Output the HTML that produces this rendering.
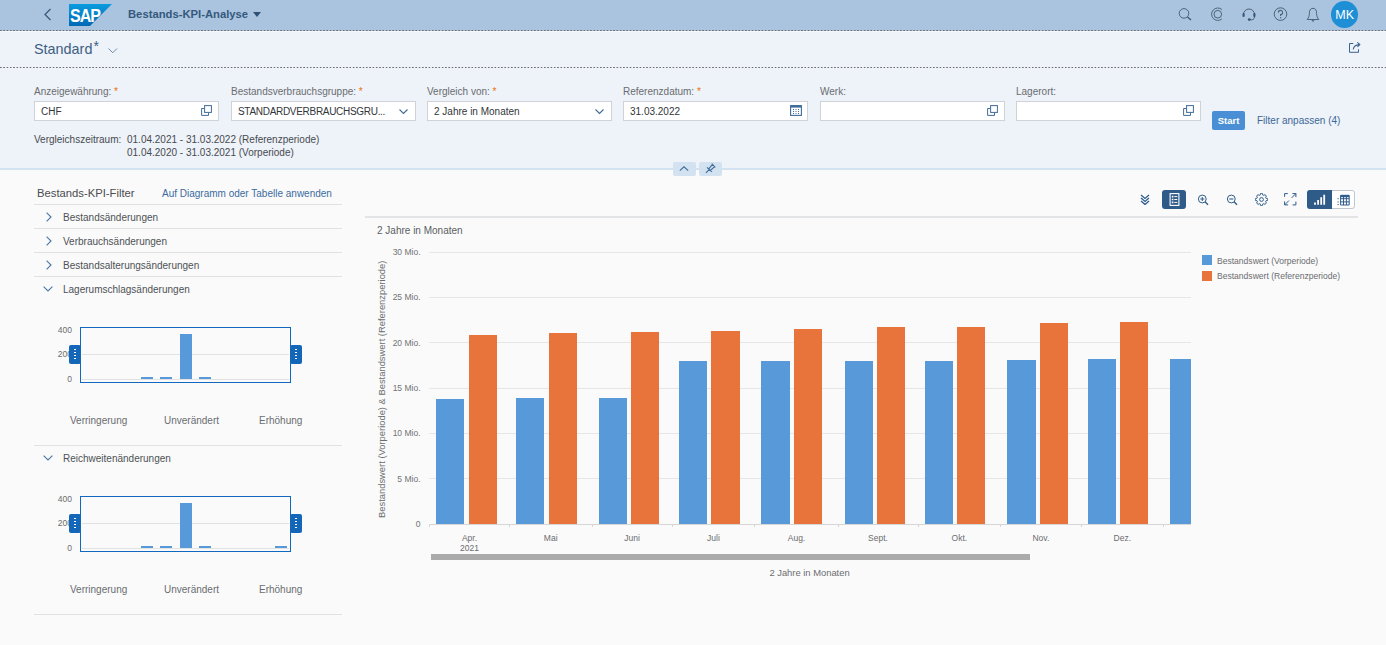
<!DOCTYPE html>
<html><head><meta charset="utf-8">
<style>
*{box-sizing:border-box;margin:0;padding:0}
html,body{width:1386px;height:645px;overflow:hidden;background:#fafafa;font-family:"Liberation Sans",sans-serif;color:#32363a}
.a{position:absolute;white-space:nowrap}
#shell{position:absolute;left:0;top:0;width:1386px;height:31px;background:#aac4df}
.dots{position:absolute;left:0;width:1386px;height:1px;background-image:linear-gradient(to right,#6e6e70 0,#6e6e70 1.5px,transparent 1.5px);background-size:3.3px 1px}
#hdr{position:absolute;left:0;top:31px;width:1386px;height:139px;background:#eef2f9;border-bottom:2px solid #d3e2f0}
.lbl{font-size:10px;color:#6a6d70}
.req{color:#e9730c}
.inp{position:absolute;top:101px;height:19.5px;width:185px;background:#fff;border:1px solid #cfd3d8}
.inp span{position:absolute;left:6px;top:3.6px;font-size:10px;color:#32363a}
.ptxt{font-size:10px;color:#474b4f}
.line{position:absolute;height:1px;background:#e0e2e4}
.ytk{font-size:9px;color:#6a6d70;text-align:right;width:40px}
.xl{font-size:9px;color:#6a6d70;text-align:center;width:60px}
.bb{position:absolute;background:#5899da}
.ob{position:absolute;background:#e8743b}
</style></head><body>
<div id="shell">
  <svg class="a" style="left:43px;top:8px" width="9" height="13" viewBox="0 0 9 13"><path d="M7.5 1 L2 6.5 L7.5 12" fill="none" stroke="#3b5a7a" stroke-width="1.3"/></svg>
  <svg class="a" style="left:69px;top:4px" width="43" height="22" viewBox="0 0 43 22">
    <defs><linearGradient id="sg" x1="0" y1="0" x2="0" y2="1"><stop offset="0" stop-color="#0a9cde"/><stop offset="1" stop-color="#0168b4"/></linearGradient></defs>
    <path d="M0 0 H43 L21 22 H0 Z" fill="url(#sg)"/>
    <text x="1" y="17.8" font-family="Liberation Sans" font-weight="bold" font-size="19" fill="#fff" letter-spacing="-1.2" textLength="30" lengthAdjust="spacingAndGlyphs">SAP</text>
  </svg>
  <div class="a" style="left:128px;top:7.8px;font-size:11.25px;font-weight:bold;color:#35597d">Bestands-KPI-Analyse</div>
  <svg class="a" style="left:253px;top:12px" width="8" height="5" viewBox="0 0 8 5"><path d="M0 0 H8 L4 5Z" fill="#2e5276"/></svg>
</div>
<div class="dots" style="top:30px"></div>
<div id="hdr"></div>
<div class="a" style="left:0;top:31px;width:1386px;height:1px;background:#f6f8fc"></div>
<div class="dots" style="top:67px"></div>


<svg class="a" style="left:1178px;top:7px" width="14" height="14" viewBox="0 0 14 14"><circle cx="6" cy="6.4" r="4.8" fill="none" stroke="#4d6479" stroke-width="1"/><path d="M9.5 10 L13 13" stroke="#3f5a73" stroke-width="1.4"/></svg>
<svg class="a" style="left:1211px;top:7px" width="14" height="15" viewBox="0 0 14 15"><path d="M10.8 2.45 A6.2 6.2 0 1 0 10.8 11.95" fill="none" stroke="#4d6479" stroke-width="1"/><circle cx="6.8" cy="7.2" r="3.8" fill="none" stroke="#4d6479" stroke-width="1"/></svg>
<svg class="a" style="left:1242px;top:7px" width="14" height="15" viewBox="0 0 14 15"><path d="M1.5 7.5 A5.5 5.5 0 0 1 12.5 7.5 V10 A3 3 0 0 1 8 12.5" fill="none" stroke="#4d6479" stroke-width="1"/><rect x="0.5" y="6" width="2.2" height="4" rx="1" fill="#35597d"/><rect x="11.3" y="6" width="2.2" height="4" rx="1" fill="#35597d"/><circle cx="7.3" cy="12.6" r="1.4" fill="#35597d"/></svg>
<svg class="a" style="left:1273px;top:7px" width="15" height="15" viewBox="0 0 15 15"><circle cx="7.5" cy="7.1" r="6.3" fill="none" stroke="#4d6479" stroke-width="1"/><path d="M5.4 5.6 A2.1 2.1 0 1 1 7.6 7.6 V9" fill="none" stroke="#4d6479" stroke-width="1.1"/><circle cx="7.6" cy="10.7" r="0.7" fill="#4d6479"/></svg>
<svg class="a" style="left:1306px;top:7px" width="14" height="15" viewBox="0 0 14 15"><path d="M7 1.3 C4 1.3 3.4 3.8 3.4 6.5 C3.4 9 2.6 10.6 1.2 12.5 H12.8 C11.4 10.6 10.6 9 10.6 6.5 C10.6 3.8 10 1.3 7 1.3 Z" fill="none" stroke="#4d6479" stroke-width="1"/><path d="M5.6 13.2 A1.4 1.3 0 0 0 8.4 13.2Z" fill="#35597d"/></svg>
<div class="a" style="left:1331.4px;top:1.1px;width:26.7px;height:26.7px;border-radius:50%;background:#1f8fd5"></div>
<div class="a" style="left:1331.4px;top:8px;width:26.7px;text-align:center;font-size:12.5px;color:#fff">MK</div>
<!-- variant -->
<div class="a" style="left:34px;top:41px;font-size:14.4px;color:#3d5f82">Standard<span style="position:relative;top:-3px;left:1px;font-size:14px">*</span></div>
<svg class="a" style="left:108px;top:48px" width="10" height="6" viewBox="0 0 10 6"><path d="M0.5 0.5 L4.75 4.75 L9 0.5" fill="none" stroke="#6c8aa8" stroke-width="1"/></svg>
<svg class="a" style="left:1348px;top:41px" width="14" height="13" viewBox="0 0 14 13"><path d="M5.3 2.5 H1.5 V11.3 H10.5 V8.3" fill="none" stroke="#3a6390" stroke-width="1"/><path d="M5.2 8.3 Q5.8 4.2 11.3 3.6" fill="none" stroke="#3a6390" stroke-width="1.1"/><path d="M9.3 1.4 L11.8 3.5 L9.5 5.8" fill="none" stroke="#3a6390" stroke-width="1.1"/></svg>

<!-- filter bar -->
<div class="a lbl" style="left:34px;top:85.7px">Anzeigewährung: <span class="req">*</span></div>
<div class="a lbl" style="left:231px;top:85.7px">Bestandsverbrauchsgruppe: <span class="req">*</span></div>
<div class="a lbl" style="left:427px;top:85.7px">Vergleich von: <span class="req">*</span></div>
<div class="a lbl" style="left:623px;top:85.7px">Referenzdatum: <span class="req">*</span></div>
<div class="a lbl" style="left:820px;top:85.7px">Werk:</div>
<div class="a lbl" style="left:1016px;top:85.7px">Lagerort:</div>

<div class="inp" style="left:34px"><span>CHF</span></div>
<div class="inp" style="left:231px"><span style="letter-spacing:-0.3px">STANDARDVERBRAUCHSGRU...</span></div>
<div class="inp" style="left:427px"><span>2 Jahre in Monaten</span></div>
<div class="inp" style="left:623px"><span>31.03.2022</span></div>
<div class="inp" style="left:820px"></div>
<div class="inp" style="left:1016px"></div>

<!-- value help icons -->
<svg class="a" style="left:201px;top:105px" width="11" height="11" viewBox="0 0 11 11"><path d="M3 3.5 H0.6 V10.4 H7.5 V8" fill="none" stroke="#3f6c9a" stroke-width="1"/><rect x="3.6" y="0.6" width="6.8" height="6.8" fill="none" stroke="#3f6c9a" stroke-width="1"/></svg>
<svg class="a" style="left:987px;top:105px" width="11" height="11" viewBox="0 0 11 11"><path d="M3 3.5 H0.6 V10.4 H7.5 V8" fill="none" stroke="#3f6c9a" stroke-width="1"/><rect x="3.6" y="0.6" width="6.8" height="6.8" fill="none" stroke="#3f6c9a" stroke-width="1"/></svg>
<svg class="a" style="left:1183px;top:105px" width="11" height="11" viewBox="0 0 11 11"><path d="M3 3.5 H0.6 V10.4 H7.5 V8" fill="none" stroke="#3f6c9a" stroke-width="1"/><rect x="3.6" y="0.6" width="6.8" height="6.8" fill="none" stroke="#3f6c9a" stroke-width="1"/></svg>
<!-- dropdown chevrons -->
<svg class="a" style="left:399px;top:108.5px" width="10" height="6" viewBox="0 0 10 6"><path d="M0.5 0.5 L4.5 4.5 L8.5 0.5" fill="none" stroke="#3f6c9a" stroke-width="1.1"/></svg>
<svg class="a" style="left:595px;top:108.5px" width="10" height="6" viewBox="0 0 10 6"><path d="M0.5 0.5 L4.5 4.5 L8.5 0.5" fill="none" stroke="#3f6c9a" stroke-width="1.1"/></svg>
<!-- calendar -->
<svg class="a" style="left:790px;top:104px" width="12" height="12" viewBox="0 0 12 12"><rect x="0.6" y="1.6" width="10.8" height="9.8" fill="none" stroke="#3f6c9a" stroke-width="1.1"/><rect x="0.6" y="1.6" width="10.8" height="2" fill="#3f6c9a"/><path d="M3 5.5h1M5.5 5.5h1M8 5.5h1M3 7.5h1M5.5 7.5h1M8 7.5h1M3 9.5h1M5.5 9.5h1M8 9.5h1" stroke="#3f6c9a" stroke-width="1"/></svg>

<div class="a" style="left:1212px;top:111px;width:33px;height:19px;background:#4a8fd5;border-radius:2px;color:#fff;font-size:9.5px;font-weight:bold;text-align:center;line-height:19px">Start</div>
<div class="a" style="left:1257px;top:115.3px;font-size:10px;color:#3b6895">Filter anpassen (4)</div>

<div class="a ptxt" style="left:34px;top:134px">Vergleichszeitraum:</div>
<div class="a ptxt" style="left:127px;top:134px">01.04.2021 - 31.03.2022 (Referenzperiode)</div>
<div class="a ptxt" style="left:127px;top:147px">01.04.2020 - 31.03.2021 (Vorperiode)</div>

<div class="a" style="left:673px;top:162px;width:23px;height:14px;background:#d3e2f0;border-radius:2px"></div>
<div class="a" style="left:699px;top:162px;width:23px;height:14px;background:#d3e2f0;border-radius:2px"></div>
<svg class="a" style="left:679px;top:166px" width="11" height="6" viewBox="0 0 11 6"><path d="M0.8 4.6 L5 0.8 L9.2 4.6" fill="none" stroke="#3f6c9a" stroke-width="1.1"/></svg>
<svg class="a" style="left:700px;top:160px" width="22" height="16" viewBox="0 0 22 16"><path d="M6.9 7.4 L11.9 11.8 M5.9 12.9 L9.4 9.3 M8.8 8.9 L12.4 4.4 M10.3 10.5 L14.6 6.6 M11.7 3.7 L15.3 7.3" fill="none" stroke="#3f6c9a" stroke-width="1.1"/></svg>

<!-- left panel -->
<div class="a" style="left:37px;top:187px;font-size:11.25px;color:#4a4d51">Bestands-KPI-Filter</div>
<div class="a" style="left:162px;top:187.8px;font-size:10px;color:#3a6c9f">Auf Diagramm oder Tabelle anwenden</div>
<div class="line" style="left:34px;top:204px;width:308px"></div>
<svg class="a" style="left:46px;top:212px" width="6" height="10" viewBox="0 0 6 10"><path d="M0.6 0.6 L5 5 L0.6 9.4" fill="none" stroke="#4a77a8" stroke-width="1.1"/></svg>
<div class="a ptxt" style="left:63px;top:211.7px;color:#4e5256">Bestandsänderungen</div>
<div class="line" style="left:34px;top:228px;width:308px"></div>
<svg class="a" style="left:46px;top:236px" width="6" height="10" viewBox="0 0 6 10"><path d="M0.6 0.6 L5 5 L0.6 9.4" fill="none" stroke="#4a77a8" stroke-width="1.1"/></svg>
<div class="a ptxt" style="left:63px;top:235.7px;color:#4e5256">Verbrauchsänderungen</div>
<div class="line" style="left:34px;top:252px;width:308px"></div>
<svg class="a" style="left:46px;top:260px" width="6" height="10" viewBox="0 0 6 10"><path d="M0.6 0.6 L5 5 L0.6 9.4" fill="none" stroke="#4a77a8" stroke-width="1.1"/></svg>
<div class="a ptxt" style="left:63px;top:259.7px;color:#4e5256">Bestandsalterungsänderungen</div>
<div class="line" style="left:34px;top:276px;width:308px"></div>
<svg class="a" style="left:43px;top:286px" width="10" height="6" viewBox="0 0 10 6"><path d="M0.6 0.6 L5 5 L9.4 0.6" fill="none" stroke="#4a77a8" stroke-width="1.1"/></svg>
<div class="a ptxt" style="left:63px;top:283.7px;color:#4e5256">Lagerumschlagsänderungen</div>

<div class="a" style="left:40px;top:325px;width:32px;font-size:8.5px;color:#6a6d70;text-align:right">400</div>
<div class="a" style="left:40px;top:349px;width:32px;font-size:8.5px;color:#6a6d70;text-align:right">200</div>
<div class="a" style="left:40px;top:374px;width:32px;font-size:8.5px;color:#6a6d70;text-align:right">0</div>
<div class="a" style="left:80px;top:327px;width:211px;height:56px;border:1.5px solid #1268c0;background:#fafafa"></div>
<div class="line" style="left:82px;top:354px;width:207px"></div>
<div class="line" style="left:82px;top:379px;width:207px"></div>
<div class="bb" style="left:141px;top:377px;width:12px;height:2px"></div>
<div class="bb" style="left:160px;top:377px;width:12px;height:2px"></div>
<div class="bb" style="left:180px;top:334px;width:12px;height:45px"></div>
<div class="bb" style="left:199px;top:377px;width:12px;height:2px"></div>
<div class="a" style="left:69px;top:345px;width:12px;height:19px;background:#1466b8;border-radius:2px"></div>
<div class="a" style="left:74px;top:349px;width:2px;height:11px;background-image:linear-gradient(#fff 50%,transparent 50%);background-size:2px 3px"></div>
<div class="a" style="left:290px;top:345px;width:12px;height:19px;background:#1466b8;border-radius:2px"></div>
<div class="a" style="left:295px;top:349px;width:2px;height:11px;background-image:linear-gradient(#fff 50%,transparent 50%);background-size:2px 3px"></div>

<div class="a ptxt" style="left:70px;top:414.8px;color:#6a6d70">Verringerung</div>
<div class="a ptxt" style="left:164px;top:414.8px;color:#6a6d70">Unverändert</div>
<div class="a ptxt" style="left:259px;top:414.8px;color:#6a6d70">Erhöhung</div>
<div class="line" style="left:34px;top:445px;width:308px"></div>
<svg class="a" style="left:43px;top:455px" width="10" height="6" viewBox="0 0 10 6"><path d="M0.6 0.6 L5 5 L9.4 0.6" fill="none" stroke="#4a77a8" stroke-width="1.1"/></svg><div class="a ptxt" style="left:63px;top:452.7px;color:#4e5256">Reichweitenänderungen</div>

<div class="a" style="left:40px;top:494px;width:32px;font-size:8.5px;color:#6a6d70;text-align:right">400</div>
<div class="a" style="left:40px;top:518px;width:32px;font-size:8.5px;color:#6a6d70;text-align:right">200</div>
<div class="a" style="left:40px;top:543px;width:32px;font-size:8.5px;color:#6a6d70;text-align:right">0</div>
<div class="a" style="left:80px;top:496px;width:211px;height:56px;border:1.5px solid #1268c0;background:#fafafa"></div>
<div class="line" style="left:82px;top:523px;width:207px"></div>
<div class="line" style="left:82px;top:548px;width:207px"></div>
<div class="bb" style="left:141px;top:546px;width:12px;height:2px"></div>
<div class="bb" style="left:160px;top:546px;width:12px;height:2px"></div>
<div class="bb" style="left:180px;top:503px;width:12px;height:45px"></div>
<div class="bb" style="left:199px;top:546px;width:12px;height:2px"></div>
<div class="bb" style="left:275px;top:546px;width:12px;height:2px"></div>
<div class="a" style="left:69px;top:514px;width:12px;height:19px;background:#1466b8;border-radius:2px"></div>
<div class="a" style="left:74px;top:518px;width:2px;height:11px;background-image:linear-gradient(#fff 50%,transparent 50%);background-size:2px 3px"></div>
<div class="a" style="left:290px;top:514px;width:12px;height:19px;background:#1466b8;border-radius:2px"></div>
<div class="a" style="left:295px;top:518px;width:2px;height:11px;background-image:linear-gradient(#fff 50%,transparent 50%);background-size:2px 3px"></div>

<div class="a ptxt" style="left:70px;top:583.8px;color:#6a6d70">Verringerung</div>
<div class="a ptxt" style="left:164px;top:583.8px;color:#6a6d70">Unverändert</div>
<div class="a ptxt" style="left:259px;top:583.8px;color:#6a6d70">Erhöhung</div>
<div class="line" style="left:34px;top:614px;width:308px"></div>

<!-- chart toolbar -->
<svg class="a" style="left:1140px;top:194px" width="10" height="11" viewBox="0 0 10 11"><path d="M1 1 L5 4.5 L9 1 M1 4 L5 7.5 L9 4 M1 7 L5 10.5 L9 7" fill="none" stroke="#2f5d8c" stroke-width="1.3"/></svg>
<div class="a" style="left:1162px;top:190px;width:24px;height:19px;background:#2f5b88;border-radius:3px"></div>
<svg class="a" style="left:1169px;top:193px" width="11" height="13" viewBox="0 0 11 13"><rect x="1.1" y="0.6" width="8.8" height="11.8" fill="none" stroke="#fff" stroke-width="1.1"/><path d="M2.8 2.8h1.6v1.6h-1.6zM2.8 5.7h1.6v1.6h-1.6zM2.8 8.6h1.6v1.6h-1.6z" fill="#fff"/><path d="M5.3 3.6h3M5.3 6.5h3M5.3 9.4h3" stroke="#fff" stroke-width="1"/></svg>
<svg class="a" style="left:1197px;top:193.5px" width="12" height="12" viewBox="0 0 12 12"><circle cx="5.3" cy="5" r="3.9" fill="none" stroke="#2f5d8c" stroke-width="1"/><path d="M8.1 7.8 L11 10.7" stroke="#2f5d8c" stroke-width="1.4"/><path d="M3.3 5h4M5.3 3v4" stroke="#2f5d8c" stroke-width="1"/></svg>
<svg class="a" style="left:1226px;top:193.5px" width="12" height="12" viewBox="0 0 12 12"><circle cx="5.3" cy="5" r="3.9" fill="none" stroke="#2f5d8c" stroke-width="1"/><path d="M8.1 7.8 L11 10.7" stroke="#2f5d8c" stroke-width="1.4"/><path d="M3.3 5h4" stroke="#2f5d8c" stroke-width="1.1"/></svg>
<svg class="a" style="left:1254.5px;top:192.8px" width="13" height="13" viewBox="0 0 13 13"><path d="M10.91 5.18 L12.41 5.47 A6.0 6.0 0 0 1 12.41 7.53 L10.91 7.82 A4.6 4.6 0 0 1 10.55 8.68 L11.41 9.95 A6.0 6.0 0 0 1 9.95 11.41 L8.68 10.55 A4.6 4.6 0 0 1 7.82 10.91 L7.53 12.41 A6.0 6.0 0 0 1 5.47 12.41 L5.18 10.91 A4.6 4.6 0 0 1 4.32 10.55 L3.05 11.41 A6.0 6.0 0 0 1 1.59 9.95 L2.45 8.68 A4.6 4.6 0 0 1 2.09 7.82 L0.59 7.53 A6.0 6.0 0 0 1 0.59 5.47 L2.09 5.18 A4.6 4.6 0 0 1 2.45 4.32 L1.59 3.05 A6.0 6.0 0 0 1 3.05 1.59 L4.32 2.45 A4.6 4.6 0 0 1 5.18 2.09 L5.47 0.59 A6.0 6.0 0 0 1 7.53 0.59 L7.82 2.09 A4.6 4.6 0 0 1 8.68 2.45 L9.95 1.59 A6.0 6.0 0 0 1 11.41 3.05 L10.55 4.32 A4.6 4.6 0 0 1 10.91 5.18 Z" fill="none" stroke="#2f5d8c" stroke-width="1" stroke-linejoin="round"/><circle cx="6.5" cy="6.5" r="1.9" fill="none" stroke="#2f5d8c" stroke-width="1"/></svg>
<svg class="a" style="left:1284.2px;top:193.4px" width="13" height="13" viewBox="0 0 13 13"><path d="M0.6 3.8 V0.6 H3.8 M11.9 8.6 V11.9 H8.6 M7.6 4.9 L11.9 0.6 M8.4 0.6 H11.9 V4.1 M4.9 7.6 L0.6 11.9 M0.6 8.4 V11.9 H4.1" fill="none" stroke="#2f5d8c" stroke-width="1"/></svg>
<div class="a" style="left:1307px;top:190px;width:48px;height:19px;border:1px solid #bfc6cd;border-radius:3px;background:#fff"></div>
<div class="a" style="left:1307px;top:190px;width:25px;height:19px;background:#2f5b88;border-radius:3px 0 0 3px"></div>
<svg class="a" style="left:1313px;top:193.5px" width="13" height="12" viewBox="0 0 13 12"><path d="M2 8.5V10.8M5.1 6V10.8M8.2 3.2V10.8M11.2 0.8V10.8" stroke="#fff" stroke-width="1.8"/></svg>
<svg class="a" style="left:1336.5px;top:193.5px" width="13" height="12" viewBox="0 0 13 12"><path d="M3.6 1.5H12.2V11H3.6ZM3.6 4.7H12.2M3.6 7.9H12.2M6.5 1.5V11M9.4 1.5V11" fill="none" stroke="#2f5d8c" stroke-width="1"/><rect x="3.6" y="0.8" width="8.6" height="2.4" fill="#2f5d8c"/><path d="M0.5 4.7h1.2M0.5 7.9h1.2M0.5 10.6h1.2" stroke="#2f5d8c" stroke-width="1"/></svg>
<div class="line" style="left:365px;top:216px;width:993px;height:1.5px;background:#e3e4e6"></div>

<!-- chart -->
<div class="a" style="left:377px;top:224.5px;font-size:10px;color:#5a5e62">2 Jahre in Monaten</div>
<div class="a" style="left:375.6px;top:517.8px;width:0;height:0"><div style="position:absolute;left:0;top:0;transform:rotate(-90deg);transform-origin:0 0;font-size:9.4px;color:#6a6d70;white-space:nowrap">Bestandswert (Vorperiode) &amp; Bestandswert (Referenzperiode)</div></div>
<div class="a" style="left:370px;top:247.1px;width:50.5px;text-align:right;font-size:8.5px;color:#707376">30 Mio.</div>
<div class="a" style="left:429px;top:251.8px;width:762px;height:1px;background:#e6e6e6"></div>
<div class="a" style="left:370px;top:292.4px;width:50.5px;text-align:right;font-size:8.5px;color:#707376">25 Mio.</div>
<div class="a" style="left:429px;top:297.1px;width:762px;height:1px;background:#e6e6e6"></div>
<div class="a" style="left:370px;top:337.7px;width:50.5px;text-align:right;font-size:8.5px;color:#707376">20 Mio.</div>
<div class="a" style="left:429px;top:342.4px;width:762px;height:1px;background:#e6e6e6"></div>
<div class="a" style="left:370px;top:383.0px;width:50.5px;text-align:right;font-size:8.5px;color:#707376">15 Mio.</div>
<div class="a" style="left:429px;top:387.7px;width:762px;height:1px;background:#e6e6e6"></div>
<div class="a" style="left:370px;top:428.3px;width:50.5px;text-align:right;font-size:8.5px;color:#707376">10 Mio.</div>
<div class="a" style="left:429px;top:433.0px;width:762px;height:1px;background:#e6e6e6"></div>
<div class="a" style="left:370px;top:473.6px;width:50.5px;text-align:right;font-size:8.5px;color:#707376">5 Mio.</div>
<div class="a" style="left:429px;top:478.3px;width:762px;height:1px;background:#e6e6e6"></div>
<div class="a" style="left:370px;top:518.9px;width:50.5px;text-align:right;font-size:8.5px;color:#707376">0</div>
<div class="a" style="left:429px;top:523.6px;width:762px;height:1px;background:#d6d6d6"></div>
<div class="bb" style="left:436.2px;top:398.6px;width:28.2px;height:125.5px"></div>
<div class="a" style="left:429.1px;top:524.1px;width:1px;height:3px;background:#d6d6d6"></div>
<div class="ob" style="left:468.8px;top:335.0px;width:28.2px;height:189.1px"></div>
<div class="a" style="left:439.5px;top:532.6px;width:60px;text-align:center;font-size:8.5px;color:#6a6d70">Apr.</div>
<div class="bb" style="left:516.0px;top:398.2px;width:28.2px;height:125.9px"></div>
<div class="a" style="left:508.9px;top:524.1px;width:1px;height:3px;background:#d6d6d6"></div>
<div class="ob" style="left:548.6px;top:333.1px;width:28.2px;height:191.0px"></div>
<div class="a" style="left:520.7px;top:532.6px;width:60px;text-align:center;font-size:8.5px;color:#6a6d70">Mai</div>
<div class="bb" style="left:598.6px;top:398.0px;width:28.2px;height:126.1px"></div>
<div class="a" style="left:591.5px;top:524.1px;width:1px;height:3px;background:#d6d6d6"></div>
<div class="ob" style="left:631.2px;top:331.8px;width:28.2px;height:192.3px"></div>
<div class="a" style="left:602.1px;top:532.6px;width:60px;text-align:center;font-size:8.5px;color:#6a6d70">Juni</div>
<div class="bb" style="left:678.8px;top:360.5px;width:28.2px;height:163.6px"></div>
<div class="a" style="left:671.7px;top:524.1px;width:1px;height:3px;background:#d6d6d6"></div>
<div class="ob" style="left:711.4px;top:331.0px;width:28.2px;height:193.1px"></div>
<div class="a" style="left:683.5px;top:532.6px;width:60px;text-align:center;font-size:8.5px;color:#6a6d70">Juli</div>
<div class="bb" style="left:761.4px;top:360.5px;width:28.2px;height:163.6px"></div>
<div class="a" style="left:754.3px;top:524.1px;width:1px;height:3px;background:#d6d6d6"></div>
<div class="ob" style="left:794.0px;top:328.5px;width:28.2px;height:195.6px"></div>
<div class="a" style="left:766.5px;top:532.6px;width:60px;text-align:center;font-size:8.5px;color:#6a6d70">Aug.</div>
<div class="bb" style="left:844.7px;top:360.8px;width:28.2px;height:163.3px"></div>
<div class="a" style="left:837.6px;top:524.1px;width:1px;height:3px;background:#d6d6d6"></div>
<div class="ob" style="left:877.3px;top:327.3px;width:28.2px;height:196.8px"></div>
<div class="a" style="left:848.0px;top:532.6px;width:60px;text-align:center;font-size:8.5px;color:#6a6d70">Sept.</div>
<div class="bb" style="left:924.6px;top:360.8px;width:28.2px;height:163.3px"></div>
<div class="a" style="left:917.5px;top:524.1px;width:1px;height:3px;background:#d6d6d6"></div>
<div class="ob" style="left:957.2px;top:327.3px;width:28.2px;height:196.8px"></div>
<div class="a" style="left:929.4px;top:532.6px;width:60px;text-align:center;font-size:8.5px;color:#6a6d70">Okt.</div>
<div class="bb" style="left:1007.4px;top:360.3px;width:28.2px;height:163.8px"></div>
<div class="a" style="left:1000.3px;top:524.1px;width:1px;height:3px;background:#d6d6d6"></div>
<div class="ob" style="left:1040.0px;top:322.5px;width:28.2px;height:201.6px"></div>
<div class="a" style="left:1010.9px;top:532.6px;width:60px;text-align:center;font-size:8.5px;color:#6a6d70">Nov.</div>
<div class="bb" style="left:1087.6px;top:358.9px;width:28.2px;height:165.2px"></div>
<div class="a" style="left:1080.5px;top:524.1px;width:1px;height:3px;background:#d6d6d6"></div>
<div class="ob" style="left:1120.2px;top:322.0px;width:28.2px;height:202.1px"></div>
<div class="a" style="left:1092.3px;top:532.6px;width:60px;text-align:center;font-size:8.5px;color:#6a6d70">Dez.</div>
<div class="bb" style="left:1170.2px;top:358.5px;width:20.8px;height:165.6px"></div>
<div class="a" style="left:1163.1px;top:524.1px;width:1px;height:3px;background:#d6d6d6"></div>
<div class="a" style="left:439.5px;top:542.6px;width:60px;text-align:center;font-size:8.5px;color:#6a6d70">2021</div>
<div class="a" style="left:431px;top:554px;width:599px;height:5.6px;background:#ababab"></div>
<div class="a" style="left:769.4px;top:566.6px;font-size:9.4px;color:#6a6d70">2 Jahre in Monaten</div>
<div class="a" style="left:1202px;top:255.2px;width:10.2px;height:10px;background:#5899da"></div>
<div class="a" style="left:1202px;top:270.7px;width:10.2px;height:10px;background:#e8743b"></div>
<div class="a" style="left:1217px;top:255.7px;font-size:8.55px;color:#6a6d70">Bestandswert (Vorperiode)</div>
<div class="a" style="left:1217px;top:270.8px;font-size:8.55px;color:#6a6d70">Bestandswert (Referenzperiode)</div>
<!-- /chart --><!-- /chart --><!-- /chart -->
</body></html>
